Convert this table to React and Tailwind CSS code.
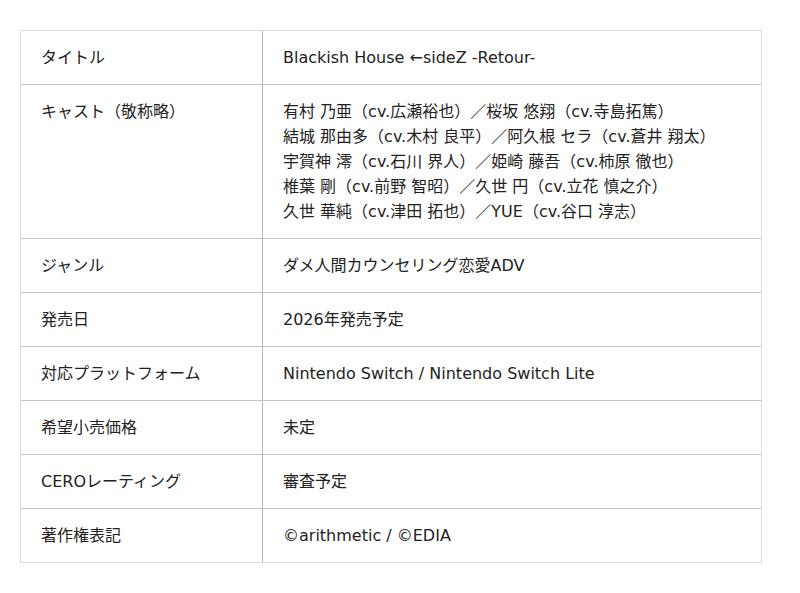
const rows = [
  { label: "タイトル", value: ["Blackish House ←sideZ -Retour-"] },
  {
    label: "キャスト（敬称略）",
    value: [
      "有村 乃亜（cv.広瀬裕也）／桜坂 悠翔（cv.寺島拓篤）",
      "結城 那由多（cv.木村 良平）／阿久根 セラ（cv.蒼井 翔太）",
      "宇賀神 澪（cv.石川 界人）／姫崎 藤吾（cv.柿原 徹也）",
      "椎葉 剛（cv.前野 智昭）／久世 円（cv.立花 慎之介）",
      "久世 華純（cv.津田 拓也）／YUE（cv.谷口 淳志）",
    ],
  },
  { label: "ジャンル", value: ["ダメ人間カウンセリング恋愛ADV"] },
  { label: "発売日", value: ["2026年発売予定"] },
  { label: "対応プラットフォーム", value: ["Nintendo Switch / Nintendo Switch Lite"] },
  { label: "希望小売価格", value: ["未定"] },
  { label: "CEROレーティング", value: ["審査予定"] },
  { label: "著作権表記", value: ["©arithmetic / ©EDIA"] },
];

export default function App() {
  return (
    <div
      className="min-h-[593px] bg-white pt-[30px] pl-5 pr-[38px] text-[16px] leading-[25px] text-[#222]"
      style={{ fontFamily: '"DejaVu Sans", "Noto Sans CJK JP", sans-serif' }}
    >
      <div className="border border-[#ddd]">
        {rows.map((row, i) => (
          <div
            key={i}
            className={"flex " + (i < rows.length - 1 ? "border-b border-[#c4c4c4]" : "")}
          >
            <div className="w-[242px] shrink-0 border-r border-[#b8b8b8] px-5 py-[14px]">
              {row.label}
            </div>
            <div className="flex-1 px-5 py-[14px]">
              {row.value.map((line, j) => (
                <div key={j}>{line}</div>
              ))}
            </div>
          </div>
        ))}
      </div>
    </div>
  );
}
